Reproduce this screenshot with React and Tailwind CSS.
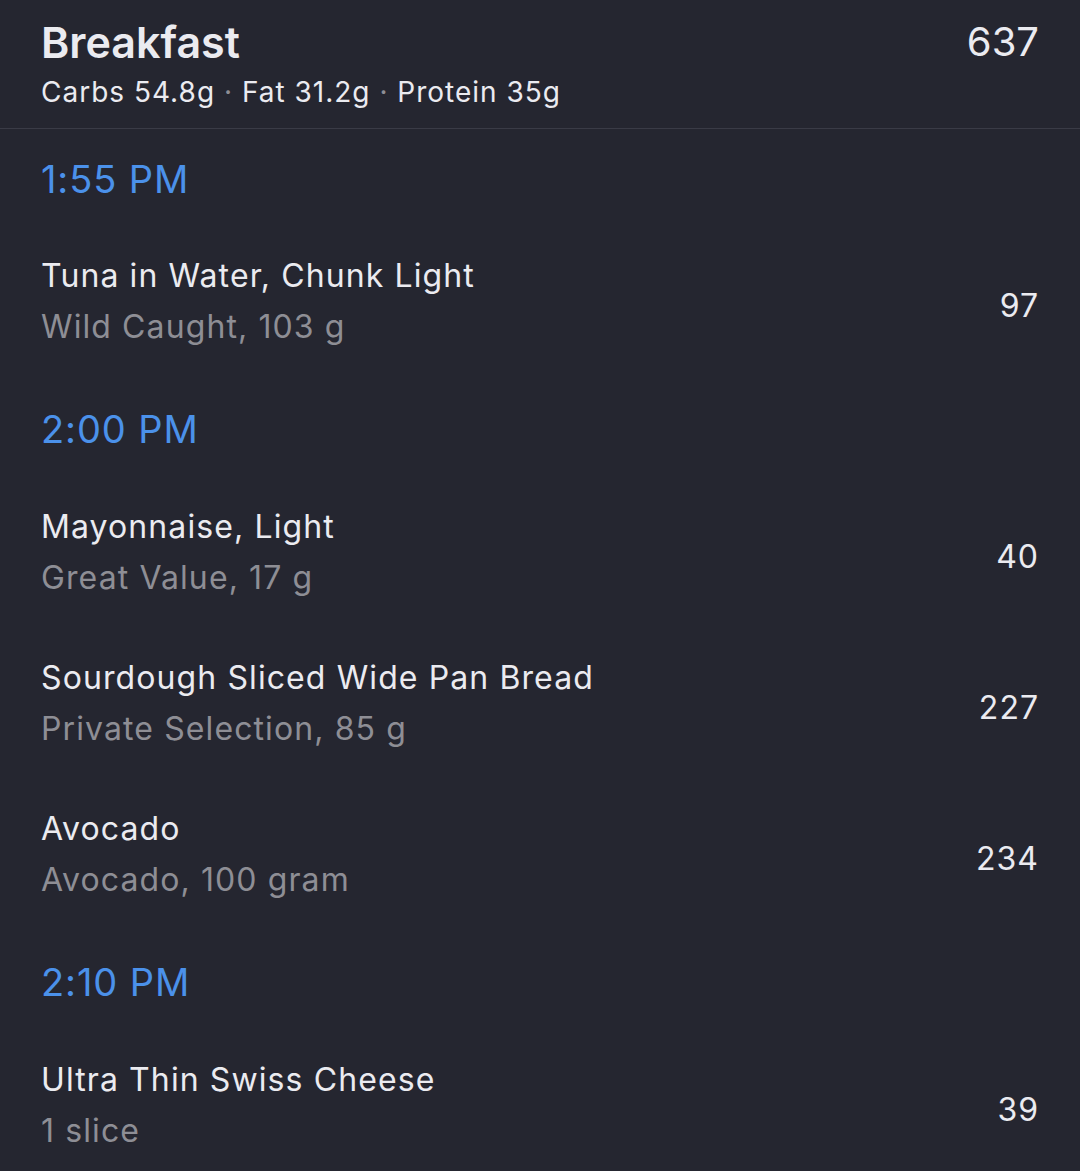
import React from 'react';

const groups = [
  {
    time: '1:55 PM',
    first: true,
    items: [{ name: 'Tuna in Water, Chunk Light', detail: 'Wild Caught, 103 g', cal: 97 }],
  },
  {
    time: '2:00 PM',
    items: [
      { name: 'Mayonnaise, Light', detail: 'Great Value, 17 g', cal: 40 },
      { name: 'Sourdough Sliced Wide Pan Bread', detail: 'Private Selection, 85 g', cal: 227 },
      { name: 'Avocado', detail: 'Avocado, 100 gram', cal: 234 },
    ],
  },
  {
    time: '2:10 PM',
    items: [{ name: 'Ultra Thin Swiss Cheese', detail: '1 slice', cal: 39 }],
  },
];

const FoodRow = ({ item }) => (
  <div className="flex h-[151px] items-center justify-between">
    <div className="tracking-[1.1px]">
      <div className="text-[32px] leading-[51px] text-[#ebebf0]">{item.name}</div>
      <div className="text-[32px] leading-[51px] text-[#8e8e95]">{item.detail}</div>
    </div>
    <div className="mt-[9px] text-[32px] leading-[51px] tracking-[1px] text-[#ebebf0]">{item.cal}</div>
  </div>
);

const App = () => {
  return (
    <div
      className="min-h-[1171px] w-full overflow-hidden bg-[#252630]"
      style={{ fontFamily: 'Inter, "Noto Sans", sans-serif' }}
    >
      <div className="flex justify-between border-b border-[#3a3b46] px-[41px] pt-[17px] pb-[11px]">
        <div>
          <div className="text-[43px] font-semibold leading-[50px] text-[#ebebf0]">Breakfast</div>
          <div className="text-[28px] leading-[50px] tracking-[1px] text-[#ebebf0]">
            Carbs 54.8g <span className="text-[#8e8e95]">·</span> Fat 31.2g{' '}
            <span className="text-[#8e8e95]">·</span> Protein 35g
          </div>
        </div>
        <div className="text-[40px] leading-[50px] text-[#ebebf0]">637</div>
      </div>

      <div className="px-[41px]">
        {groups.map((g) => (
          <div key={g.time}>
            <div
              className={
                g.first
                  ? 'pt-[25px] pb-[21px] text-[38px] leading-[50px] tracking-[0.9px] text-[#4b91ea]'
                  : 'pt-[28px] pb-[22px] text-[38px] leading-[50px] tracking-[0.9px] text-[#4b91ea]'
              }
            >
              {g.time}
            </div>
            {g.items.map((item) => (
              <FoodRow key={item.name} item={item} />
            ))}
          </div>
        ))}
      </div>
    </div>
  );
};

export default App;
